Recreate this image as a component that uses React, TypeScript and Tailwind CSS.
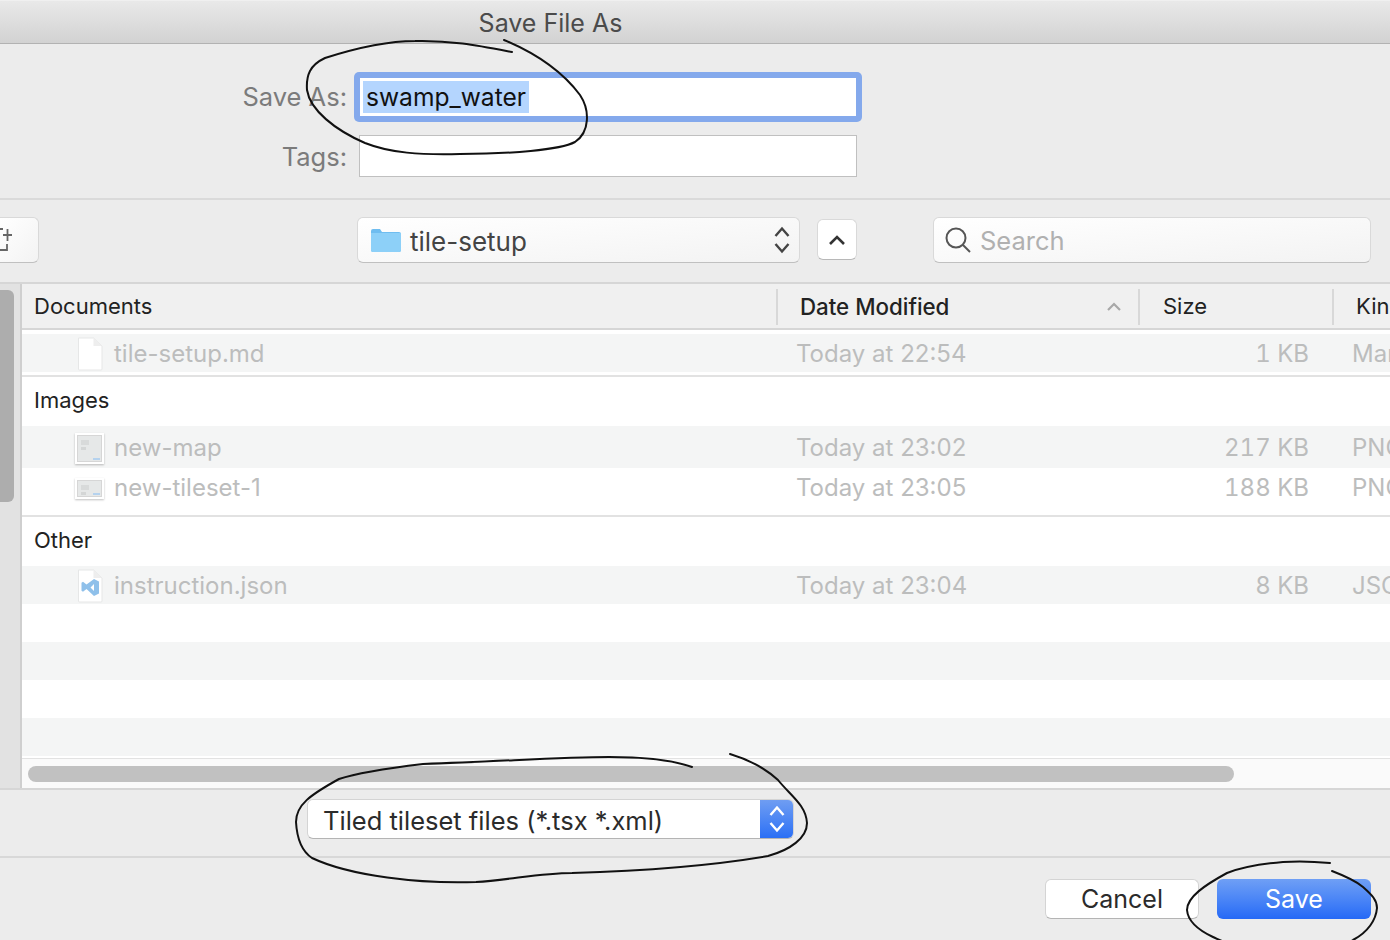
import React from "react";

const sans = "[font-family:Inter,'Liberation_Sans',sans-serif]";

function DocIcon({ vs }: { vs?: boolean }) {
  return (
    <svg width="26" height="34" viewBox="0 0 26 34" className="shrink-0 ml-[1px]">
      <path d="M1.500 1h15L25 9v23a1 1 0 0 1-1 1H2.500a1 1 0 0 1-1-1z" fill="#fff" stroke="#e6e7e7" />
      <path d="M16.500 1v8H25z" fill="#eeeeee" />
      {vs && <path d="M17 10l5 2.500v12L17 27l-7.500-7-3.500 2.800-1.500-1v-8l1.500-1 3.500 2.800zm0 5l-3.500 3.500L17 22z" fill="#8fc0ea" />}
    </svg>
  );
}

function ImgIcon({ wide }: { wide?: boolean }) {
  return (
    <div
      className={
        wide
          ? "w-[29px] h-[21px] -ml-[1px] bg-white p-[2px] shadow-[0_1px_2px_rgba(0,0,0,0.25)] shrink-0"
          : "w-[29px] h-[31px] -ml-[1px] bg-white p-[2px] shadow-[0_1px_2px_rgba(0,0,0,0.25)] shrink-0"
      }
    >
      <div className="relative w-full h-full bg-[#e6e8e8] border border-[#d6d6d6] overflow-hidden">
        <div className="w-[8px] h-[5px] mt-[4px] ml-[3px] bg-[#d8dada]" />
        <div className="w-[5px] h-[3px] mt-[2px] ml-[3px] bg-[#d4d6d6]" />
        <div className="absolute right-[1px] bottom-[1px] w-[7px] h-[2px] bg-[#b5d2ee]" />
      </div>
    </div>
  );
}

type RowProps = {
  icon: React.ReactNode;
  name: string;
  date: string;
  size: string;
  kind: string;
  stripe?: boolean;
  cls: string;
};

function FileRow({ icon, name, date, size, kind, stripe, cls }: RowProps) {
  return (
    <div
      className={`grid grid-cols-[774px_300px_213px_1fr] items-center text-[24px] text-[#bcbdbd] ${cls} ${
        stripe ? "bg-[#f4f5f5]" : "bg-white"
      }`}
    >
      <div className="flex items-center pl-[54px]">
        <div className="w-[38px] flex justify-start">{icon}</div>
        <span>{name}</span>
      </div>
      <span>{date}</span>
      <span className="text-right tabular-nums">{size}</span>
      <span className="pl-[43px] whitespace-nowrap">{kind}</span>
    </div>
  );
}

function Group({ label }: { label: string }) {
  return (
    <div className="h-[49px] flex items-center pl-[12px] pb-[3px] text-[22px] text-[#222222] bg-white">
      {label}
    </div>
  );
}

function Stepper({ color }: { color: string }) {
  return (
    <svg width="18" height="30" viewBox="0 0 18 30" fill="none" stroke={color} strokeWidth="2.400">
      <path d="M2.500 11 9 3.500 15.500 11" />
      <path d="M2.500 19 9 26.500 15.500 19" />
    </svg>
  );
}

export default function App() {
  return (
    <div className={`relative w-[1390px] h-[940px] overflow-hidden bg-[#ececec] flex flex-col ${sans}`}>
      {/* Title bar */}
      <div className="h-[44px] shrink-0 flex items-center justify-center pr-[289px] pt-[3px] border-b border-b-[#b2b2b2] border-t border-t-[#f0f0f0] bg-gradient-to-b from-[#e9e9e9] to-[#d2d2d2] text-[25px] text-[#4b4b4b]">
        Save File As
      </div>

      {/* Name + tags */}
      <div className="h-[156px] shrink-0 border-b-2 border-b-[#dadada] flex flex-col pl-[238px] pt-[28px] text-[25.500px] text-[#7b7b7b]">
        <div className="flex items-center h-[50px]">
          <span className="w-[109px] text-right mr-[7px]">Save As:</span>
          <div className="w-[508px] h-[50px] rounded-[5px] bg-[#84a9ec] p-[6px]">
            <div className="h-full bg-white flex items-center pl-[3px] text-[24.600px] text-[#111111]">
              <span className="bg-[#b4d5fe] h-[32px] leading-[32px] px-[3px]">swamp_water</span>
            </div>
          </div>
        </div>
        <div className="flex items-center h-[42px] mt-[13px]">
          <span className="w-[109px] text-right mr-[12px] pt-[3px]">Tags:</span>
          <div className="w-[498px] h-[42px] bg-white border border-[#c0c0c0]" />
        </div>
      </div>

      {/* Toolbar */}
      <div className="h-[84px] shrink-0 border-b-2 border-b-[#d6d6d6] flex items-start pt-[17px]">
        <div className="w-[39px] h-[46px] bg-gradient-to-br from-white to-[#f3f3f3] rounded-r-[6px] border border-l-0 border-[#d9d9d9] border-b-[#c0c0c0] flex items-center overflow-hidden">
          <svg width="14" height="24" viewBox="0 0 14 24" fill="none" stroke="#666666" strokeWidth="1.800">
            <path d="M0 1h3M7 16v6H0" />
            <path d="M3 7h9M7.500 1v12" />
          </svg>
        </div>
        <div className="ml-[318px] w-[443px] h-[46px] bg-gradient-to-br from-white to-[#f3f3f3] rounded-[6px] border border-[#d9d9d9] border-b-[#c0c0c0] flex items-center pl-[12px] pr-[8px]">
          <svg width="32" height="28" viewBox="0 0 32 28" className="shrink-0">
            <path d="M1 5a2 2 0 0 1 2-2h7l2 3h17a2 2 0 0 1 2 2v16a2 2 0 0 1-2 2H3a2 2 0 0 1-2-2z" fill="#6fbdf0" />
            <path d="M1 7h30v17a2 2 0 0 1-2 2H3a2 2 0 0 1-2-2z" fill="#8dd0f8" />
          </svg>
          <span className="ml-[8px] pt-[2px] text-[26px] text-[#444444] flex-1">tile-setup</span>
          <Stepper color="#444444" />
        </div>
        <div className="ml-[17px] mt-[2px] w-[40px] h-[41px] bg-white rounded-[6px] border border-[#d9d9d9] border-b-[#b8b8b8] flex items-center justify-center">
          <svg width="18" height="12" viewBox="0 0 18 12" fill="none" stroke="#333333" strokeWidth="2.600">
            <path d="M2 10 9 3l7 7" />
          </svg>
        </div>
        <div className="ml-[76px] w-[438px] h-[46px] bg-gradient-to-br from-white to-[#f3f3f3] rounded-[6px] border border-[#d9d9d9] border-b-[#c0c0c0] flex items-center pl-[10px]">
          <svg width="28" height="28" viewBox="0 0 28 28" fill="none" stroke="#555555" strokeWidth="2">
            <circle cx="12" cy="12" r="9.500" />
            <path d="M19 19l7 7" />
          </svg>
          <span className="ml-[8px] pt-[2px] text-[25.500px] text-[#b0b0b0]">Search</span>
        </div>
      </div>

      {/* Browser */}
      <div className="h-[506px] shrink-0 flex border-b-2 border-b-[#d6d6d6]">
        <div className="w-[22px] shrink-0 bg-[#e2e2e2] border-r-2 border-r-[#cfcfcf] pt-[6px]">
          <div className="w-[14px] h-[212px] bg-[#adadad] rounded-r-[6px]" />
        </div>
        <div className="flex-1 min-w-0 flex flex-col overflow-hidden bg-white">
          <div className="h-[46px] shrink-0 bg-[#f0f0f0] border-b-2 border-b-[#d6d6d6] flex items-center pt-[1px] text-[22px] text-[#222222]">
            <div className="w-[754px] shrink-0 pl-[12px]">Documents</div>
            <div className="w-[362px] shrink-0 h-[36px] border-l-2 border-l-[#d8d8d8] flex items-center justify-between pl-[22px] pr-[16px]">
              <span className="text-[#222222] font-medium text-[22.300px]">Date Modified</span>
              <svg width="16" height="10" viewBox="0 0 16 10" fill="none" stroke="#a8a8a8" strokeWidth="2.200">
                <path d="M2 8l6-6 6 6" />
              </svg>
            </div>
            <div className="w-[194px] shrink-0 h-[36px] border-l-2 border-l-[#d8d8d8] flex items-center pl-[23px]">Size</div>
            <div className="h-[36px] border-l-2 border-l-[#d8d8d8] flex items-center pl-[22px] whitespace-nowrap">Kind</div>
          </div>
          <div className="h-[4px] shrink-0" />
          <FileRow stripe cls="h-[38px] pt-[2px]" icon={<DocIcon />} name="tile-setup.md" date="Today at 22:54" size="1 KB" kind="Markdown" />
          <div className="h-[5px] shrink-0 border-b-2 border-b-[#e2e2e2]" />
          <Group label="Images" />
          <FileRow stripe cls="h-[42px] pt-[2px]" icon={<ImgIcon />} name="new-map" date="Today at 23:02" size="217 KB" kind="PNG image" />
          <FileRow cls="h-[40px]" icon={<ImgIcon wide />} name="new-tileset-1" date="Today at 23:05" size="188 KB" kind="PNG image" />
          <div className="h-[9px] shrink-0 border-b-2 border-b-[#e2e2e2]" />
          <Group label="Other" />
          <FileRow stripe cls="h-[38px] pt-[2px]" icon={<DocIcon vs />} name="instruction.json" date="Today at 23:04" size="8 KB" kind="JSON" />
          <div className="h-[38px] shrink-0 bg-white" />
          <div className="h-[38px] shrink-0 bg-[#f4f5f5]" />
          <div className="h-[38px] shrink-0 bg-white" />
          <div className="h-[38px] shrink-0 bg-[#f4f5f5]" />
          <div className="h-[3px] shrink-0 bg-white border-b border-b-[#e2e2e2]" />
          <div className="flex-1 bg-[#fafafa] flex items-center pl-[6px]">
            <div className="w-[1206px] h-[16px] rounded-full bg-[#c1c1c1]" />
          </div>
        </div>
      </div>

      {/* File type */}
      <div className="h-[68px] shrink-0 border-b-2 border-b-[#d8d8d8] pl-[307px] pt-[9px]">
        <div className="w-[487px] h-[40px] rounded-[6px] bg-white border border-[#d4d4d4] border-b-[#b4b4b4] flex items-center overflow-hidden">
          <span className="flex-1 pl-[15px] pt-[4px] text-[25.500px] text-[#2b2b2b] whitespace-nowrap">Tiled tileset files (*.tsx *.xml)</span>
          <div className="w-[33px] h-full shrink-0 bg-gradient-to-b from-[#6f9df2] to-[#2a6ff5] flex items-center justify-center">
            <Stepper color="#ffffff" />
          </div>
        </div>
      </div>

      {/* Buttons */}
      <div className="flex-1 flex items-start justify-end pr-[19px] pt-[21px] gap-[18px]">
        <div className="w-[154px] h-[40px] pt-[1px] rounded-[6px] bg-white border border-[#d4d4d4] border-b-[#b4b4b4] flex items-center justify-center text-[25px] text-[#2b2b2b]">
          Cancel
        </div>
        <div className="w-[154px] h-[40px] pt-[1px] rounded-[6px] bg-gradient-to-b from-[#6f9ff5] to-[#2569f6] flex items-center justify-center text-[25px] text-white">
          Save
        </div>
      </div>

      {/* Hand-drawn annotations */}
      <svg
        className="absolute inset-0 pointer-events-none"
        width="1390"
        height="940"
        viewBox="0 0 1390 940"
        fill="none"
        stroke="#111111"
        strokeWidth="2"
        strokeLinecap="round"
      >
        <path d="M512 52C480 46 450 40 415 41C385 41 350 50 325 58C310 65 306 75 307 90C310 110 335 130 365 143C390 153 420 155 460 154C510 154 560 150 575 142C590 132 590 110 580 95C565 75 540 55 504 40" />
        <path d="M692 767C670 759 640 757 609 757C560 757 510 761 423 764C390 768 360 772 339 779C310 795 296 805 296 822C297 840 303 852 312 858C350 876 420 884 476 882C510 880 540 873 572 873C640 871 710 866 768 856C790 850 807 838 807 823C806 805 790 795 778 780C765 768 750 760 730 754" />
        <path d="M1330 863C1310 861 1296 861 1283 862C1260 864 1240 868 1227 873C1205 885 1187 897 1187 910C1188 922 1198 930 1213 937C1222 941 1228 944 1236 946" />
        <path d="M1332 871C1345 876 1355 880 1363 887C1372 895 1377 900 1377 908C1376 920 1368 932 1353 940C1348 943 1342 945 1338 947" />
      </svg>
    </div>
  );
}
